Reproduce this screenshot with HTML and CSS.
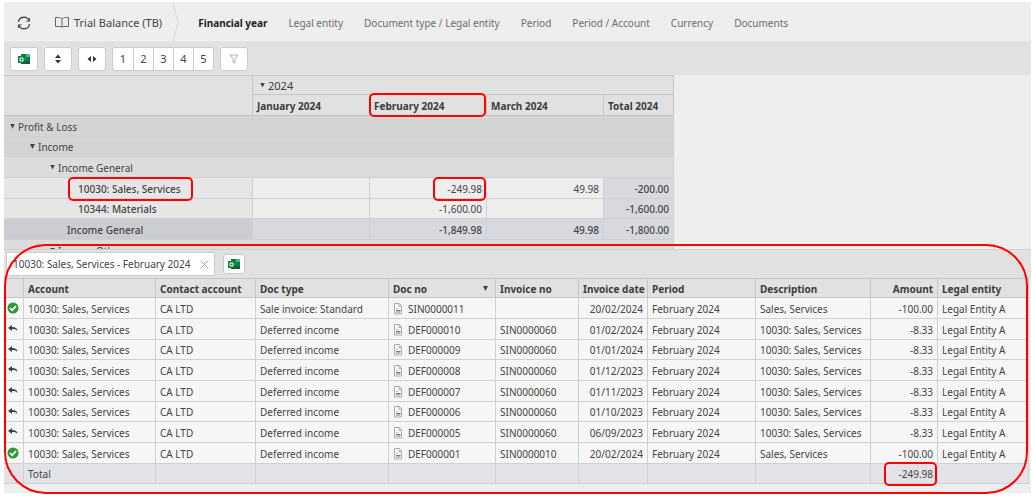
FILE: index.html
```html
<!DOCTYPE html>
<html lang="en">
<head>
    <meta charset="UTF-8">
    <meta name="viewport" content="width=device-width, initial-scale=1.0">
    <title>Trial Balance (TB)</title>
    <link rel="stylesheet" href="styles.css">
</head>
<body>
    <!-- Shared icons -->
    <svg class="sprite" aria-hidden="true">
        <symbol id="excel" viewBox="0 0 14 12">
            <path d="M4 1h9v10H4z" fill="#21a366"/>
            <path d="M4 1h5v3H4z" fill="#107c41"/>
            <path d="M9 1h4v3H9z" fill="#33c481"/>
            <path d="M4 7h9v4H4z" fill="#185c37"/>
            <path d="M9 4h4v4H9z" fill="#107c41"/>
            <path d="M1 3h7v7H1z" fill="#107c41"/>
            <path d="M3 5h3v3H3z" fill="none" stroke="#fff"/>
        </symbol>
        <symbol id="ok" viewBox="0 0 12 12">
            <circle cx="6" cy="6" r="5.5" fill="#2a9a35"/>
            <path d="M3 6l2.2 2.2L9 4.2" fill="none" stroke="#fff" stroke-width="1.7"/>
        </symbol>
        <symbol id="reply" viewBox="0 0 12 12">
            <path d="M1 5l4-3v2c3.500 0 5.300 1 5.300 4C9.300 6.300 7.600 6 5 6v2z" fill="#404040"/>
        </symbol>
        <symbol id="doc" viewBox="0 0 10 12">
            <path d="M1.500.5h5l2 2.500v8h-7z" fill="#fafafa" stroke="#aaa"/>
            <path d="M6 1v2.500h2.500" fill="none" stroke="#aaa"/>
            <path d="M3 5.500h2M3 9.500h4" stroke="#bbb"/>
            <path d="M3 7h4.500v1.500H3z" fill="#777"/>
        </symbol>
    </svg>

    <!-- Navigation -->
    <header class="topbar">
        <button class="refresh" aria-label="Refresh">
            <svg width="14" height="14" viewBox="0 0 14 14" fill="none" stroke="#444" stroke-width="1.300">
                <path d="M1.500 6A5.500 5.500 0 0 1 12 4.500M12.500 8A5.500 5.500 0 0 1 2 9.500"/>
                <path d="M12.600 2v3.200H9.500M1.400 12V8.800h3.100" stroke-width="1"/>
            </svg>
        </button>
        <a class="report" href="#">
            <svg width="14" height="11" viewBox="0 0 14 11" fill="none" stroke="#666">
                <path d="M7 2C6 .8 5 .5 3.500.5h-3v9H5c1 0 1.600.3 2 .8.400-.5 1-.8 2-.8h4.500v-9h-3C9 .5 8 .8 7 2zM7 2v8"/>
            </svg>
            Trial Balance (TB)
        </a>
        <svg class="chevron" width="8" height="39" viewBox="0 0 8 39" fill="none" stroke="#d6d6d6">
            <path d="M1 0l5 19.500L1 39"/>
        </svg>
        <nav class="views">
            <a class="active" href="#">Financial year</a>
            <a href="#">Legal entity</a>
            <a href="#">Document type / Legal entity</a>
            <a href="#">Period</a>
            <a href="#">Period / Account</a>
            <a href="#">Currency</a>
            <a href="#">Documents</a>
        </nav>
    </header>

    <!-- Toolbar -->
    <div class="toolbar">
        <button class="btn" aria-label="Export to Excel"><svg width="14" height="12"><use href="#excel"/></svg></button>
        <button class="btn" aria-label="Expand rows">
            <svg width="8" height="10" viewBox="0 0 8 10" fill="#333"><path d="M1 4l3-3.500L7 4zM1 6l3 3.500L7 6z"/></svg>
        </button>
        <button class="btn" aria-label="Expand columns">
            <svg width="10" height="8" viewBox="0 0 10 8" fill="#333"><path d="M4 1L.5 4 4 7zM6 1l3.500 3L6 7z"/></svg>
        </button>
        <div class="levels">
            <button>1</button>
            <button>2</button>
            <button>3</button>
            <button>4</button>
            <button>5</button>
        </div>
        <button class="btn" aria-label="Filter">
            <svg width="10" height="10" viewBox="0 0 10 10" fill="none" stroke="#a9b4c8"><path d="M1 1h8L6 5v4L4 8V5z"/></svg>
        </button>
    </div>

    <!-- Trial balance -->
    <main class="pivot">
        <table class="pivot-table">
            <colgroup>
                <col class="w-name"><col class="w-month"><col class="w-month"><col class="w-month"><col class="w-total">
            </colgroup>
            <thead>
                <tr><th rowspan="2"></th><th class="year" colspan="4"><i class="tri"></i>2024</th></tr>
                <tr><th>January 2024</th><th class="marked">February 2024</th><th>March 2024</th><th>Total 2024</th></tr>
            </thead>
            <tbody>
                <tr class="group"><td class="level-1" colspan="5"><i class="tri"></i>Profit &amp; Loss</td></tr>
                <tr class="group"><td class="level-2" colspan="5"><i class="tri"></i>Income</td></tr>
                <tr class="group light"><td class="level-3" colspan="5"><i class="tri"></i>Income General</td></tr>
                <tr><td class="name"><span class="marked-name">10030: Sales, Services</span></td><td></td><td><span class="marked-value">-249.98</span></td><td>49.98</td><td class="total">-200.00</td></tr>
                <tr><td class="name">10344: Materials</td><td></td><td>-1,600.00</td><td></td><td class="total">-1,600.00</td></tr>
                <tr class="subtotal"><td class="name">Income General</td><td></td><td>-1,849.98</td><td>49.98</td><td class="total">-1,800.00</td></tr>
                <tr class="group light"><td class="level-3" colspan="5"><i class="tri"></i>Income Other</td></tr>
            </tbody>
        </table>
    </main>

    <!-- Documents behind the selected amount -->
    <section class="detail">
        <div class="tabs">
            <div class="tab">
                <span>10030: Sales, Services - February 2024</span>
                <button class="close" aria-label="Close">
                    <svg width="9" height="9" viewBox="0 0 9 9" stroke="#aaa"><path d="M.5.5l8 8M8.500.5l-8 8"/></svg>
                </button>
            </div>
            <button class="btn small" aria-label="Export documents to Excel"><svg width="14" height="12"><use href="#excel"/></svg></button>
        </div>
        <table class="docs">
            <colgroup>
                <col class="w-icon"><col class="w-account"><col class="w-contact"><col class="w-type"><col class="w-doc"><col class="w-invoice"><col class="w-date"><col class="w-period"><col class="w-desc"><col class="w-amount"><col>
            </colgroup>
            <thead>
                <tr><th></th><th>Account</th><th>Contact account</th><th>Doc type</th><th><div class="sorted">Doc no<i class="tri"></i></div></th><th>Invoice no</th><th>Invoice date</th><th>Period</th><th>Description</th><th class="num">Amount</th><th>Legal entity</th></tr>
            </thead>
            <tbody>
                <tr><td class="state"><svg><use href="#ok"/></svg></td><td>10030: Sales, Services</td><td>CA LTD</td><td>Sale invoice: Standard</td><td><svg class="doc"><use href="#doc"/></svg>SIN0000011</td><td></td><td class="num">20/02/2024</td><td>February 2024</td><td>Sales, Services</td><td class="num">-100.00</td><td>Legal Entity A</td></tr>
                <tr><td class="state"><svg><use href="#reply"/></svg></td><td>10030: Sales, Services</td><td>CA LTD</td><td>Deferred income</td><td><svg class="doc"><use href="#doc"/></svg>DEF000010</td><td>SIN0000060</td><td class="num">01/02/2024</td><td>February 2024</td><td>10030: Sales, Services</td><td class="num">-8.33</td><td>Legal Entity A</td></tr>
                <tr><td class="state"><svg><use href="#reply"/></svg></td><td>10030: Sales, Services</td><td>CA LTD</td><td>Deferred income</td><td><svg class="doc"><use href="#doc"/></svg>DEF000009</td><td>SIN0000060</td><td class="num">01/01/2024</td><td>February 2024</td><td>10030: Sales, Services</td><td class="num">-8.33</td><td>Legal Entity A</td></tr>
                <tr><td class="state"><svg><use href="#reply"/></svg></td><td>10030: Sales, Services</td><td>CA LTD</td><td>Deferred income</td><td><svg class="doc"><use href="#doc"/></svg>DEF000008</td><td>SIN0000060</td><td class="num">01/12/2023</td><td>February 2024</td><td>10030: Sales, Services</td><td class="num">-8.33</td><td>Legal Entity A</td></tr>
                <tr><td class="state"><svg><use href="#reply"/></svg></td><td>10030: Sales, Services</td><td>CA LTD</td><td>Deferred income</td><td><svg class="doc"><use href="#doc"/></svg>DEF000007</td><td>SIN0000060</td><td class="num">01/11/2023</td><td>February 2024</td><td>10030: Sales, Services</td><td class="num">-8.33</td><td>Legal Entity A</td></tr>
                <tr><td class="state"><svg><use href="#reply"/></svg></td><td>10030: Sales, Services</td><td>CA LTD</td><td>Deferred income</td><td><svg class="doc"><use href="#doc"/></svg>DEF000006</td><td>SIN0000060</td><td class="num">01/10/2023</td><td>February 2024</td><td>10030: Sales, Services</td><td class="num">-8.33</td><td>Legal Entity A</td></tr>
                <tr><td class="state"><svg><use href="#reply"/></svg></td><td>10030: Sales, Services</td><td>CA LTD</td><td>Deferred income</td><td><svg class="doc"><use href="#doc"/></svg>DEF000005</td><td>SIN0000060</td><td class="num">06/09/2023</td><td>February 2024</td><td>10030: Sales, Services</td><td class="num">-8.33</td><td>Legal Entity A</td></tr>
                <tr><td class="state"><svg><use href="#ok"/></svg></td><td>10030: Sales, Services</td><td>CA LTD</td><td>Deferred income</td><td><svg class="doc"><use href="#doc"/></svg>DEF000001</td><td>SIN0000010</td><td class="num">20/02/2024</td><td>February 2024</td><td>Sales, Services</td><td class="num">-100.00</td><td>Legal Entity A</td></tr>
                <tr class="sum"><td></td><td>Total</td><td></td><td></td><td></td><td></td><td></td><td></td><td></td><td class="num"><span class="marked-value">-249.98</span></td><td></td></tr>
            </tbody>
        </table>
    </section>
</body>
</html>
```
FILE: styles.css
```css
* {
    box-sizing: border-box;
}

body {
    display: flex;
    flex-direction: column;
    height: 100vh;
    margin: 0;
    padding: 2px 1px 4px 4px;
    background-color: #fff;
    color: #444;
    font-family: "Noto Sans", "Open Sans", sans-serif;
    font-size: 10px;
    line-height: 16px;
}

a {
    color: inherit;
    text-decoration: none;
}

button {
    padding: 0;
    border: none;
    background: none;
    color: inherit;
    font: inherit;
    cursor: pointer;
}

svg {
    display: block;
}

.sprite {
    position: absolute;
    width: 0;
    height: 0;
}

/* Navigation */
.topbar {
    display: flex;
    flex: none;
    align-items: center;
    height: 39px;
    padding: 2px 0 0 13px;
    background-color: #eee;
    white-space: nowrap;
}

.report {
    display: flex;
    align-items: center;
    gap: 5px;
    margin: 0 10px 0 24px;
    font-size: 11px;
}

.views {
    display: flex;
    gap: 21px;
    margin-left: 18px;
    color: #6c6c6c;
}

.active {
    color: #222;
    font-weight: 700;
}

/* Toolbar */
.toolbar {
    display: flex;
    flex: none;
    align-items: center;
    gap: 6px;
    height: 34px;
    padding-left: 6px;
    border-top: 1px solid #e6e6e6;
    background-color: #e1e1e1;
}

.btn {
    display: flex;
    align-items: center;
    justify-content: center;
    width: 28px;
    height: 24px;
    border: 1px solid #ccc;
    border-radius: 3px;
    background-color: #fff;
}

.btn.small {
    width: 22px;
    height: 20px;
}

.levels {
    display: flex;
    border: 1px solid #ccc;
    border-radius: 3px;
    background-color: #fff;
    font-size: 11px;
}

.levels button {
    width: 20px;
    height: 22px;
}

.levels button + button {
    border-left: 1px solid #ccc;
}

/* Tables */
table {
    border-collapse: separate;
    border-spacing: 0;
    table-layout: fixed;
}

th, td {
    overflow: hidden;
    padding: 1px 4px 0;
    border-right: 1px solid #d0d0d0;
    border-bottom: 1px solid #d0d0d0;
    text-align: left;
    white-space: nowrap;
}

th {
    border-color: #c6c6c6;
    background-color: #e1e1e1;
    color: #3c3c3c;
    font-weight: 700;
}

tr {
    height: 21px;
}

.tri {
    display: inline-block;
    width: 5px;
    height: 5px;
    margin-right: 3px;
    background-color: #444;
    clip-path: polygon(0 0, 100% 0, 50% 100%);
    vertical-align: 2px;
}

/* Trial balance */
.pivot {
    flex: 1;
    min-height: 0;
    overflow: hidden;
    background-color: #eee;
}

.pivot-table {
    width: 670px;
}

.w-name { width: 249px; }
.w-month { width: 117px; }
.w-total { width: 70px; }

.pivot-table thead tr:first-child {
    height: 20px;
}

.pivot-table tbody tr:nth-child(3n + 2) {
    height: 20px;
}

.pivot-table th {
    border-top: 1px solid #c6c6c6;
}

.pivot-table thead tr + tr th {
    border-top: none;
}

.pivot-table .year {
    padding-left: 7px;
    font-size: 11px;
    font-weight: 400;
}

.pivot-table td {
    background-color: #eee;
    text-align: right;
}

.pivot-table .group td {
    border-color: #cfcfcf;
    background-color: #d4d4d4;
    text-align: left;
}

.pivot-table .light td {
    background-color: #dcdcdc;
}

.pivot-table .level-1 { padding-left: 6px; }
.pivot-table .level-2 { padding-left: 26px; }
.pivot-table .level-3 { padding-left: 46px; }

.pivot-table .name {
    padding-left: 74px;
    background-color: #e6e6e6;
    font-weight: 500;
    text-align: left;
}

.pivot-table .total {
    background-color: #d8d9de;
    font-weight: 500;
}

.pivot-table .subtotal td {
    background-color: #d8d9de;
    font-weight: 500;
}

.pivot-table .subtotal .name {
    padding-left: 63px;
    background-color: #cccdd2;
}

/* Red callouts */
.marked,
.marked-name,
.marked-value {
    position: relative;
}

th.marked,
td:has(.marked-name),
td:has(.marked-value) {
    overflow: visible;
}

.marked::after,
.marked-name::after,
.marked-value::after,
.detail::after {
    content: "";
    position: absolute;
    border: 2px solid #f00;
    border-radius: 5px;
    pointer-events: none;
}

.marked::after {
    inset: -2px 0 -2px -1px;
}

.marked-name::after {
    inset: -5px -12px -5px -10px;
}

.marked-value::after {
    inset: -5px -4px -5px -15px;
}

/* Documents */
.detail {
    position: relative;
    flex: none;
    padding-bottom: 9px;
    background-color: #eee;
}

.detail::after {
    inset: -5px 3px -1px 0;
    border-radius: 42px;
}

.tabs {
    display: flex;
    align-items: center;
    gap: 8px;
    height: 29px;
    padding-left: 2px;
    border-top: 1px solid #d0d0d0;
    background-color: #e1e1e1;
}

.tab {
    display: flex;
    align-items: center;
    gap: 10px;
    height: 24px;
    padding: 0 5px 0 6px;
    border: 1px solid #ccc;
    background-color: #fff;
}

.docs {
    width: 100%;
    padding-right: 2px;
}

.docs td {
    background-color: #f6f6f6;
}

.docs th {
    border-top: 1px solid #c6c6c6;
}

.docs thead tr,
.docs tbody tr:nth-child(3n) {
    height: 20px;
}

.docs .num {
    text-align: right;
}

.docs .state {
    padding: 0 3px;
}

.state svg {
    width: 12px;
    height: 12px;
}

.docs .doc {
    display: inline-block;
    width: 10px;
    height: 12px;
    margin-right: 5px;
    vertical-align: -2px;
}

.docs .sum td {
    background-color: #e2e3e9;
}

.sorted {
    display: flex;
    align-items: center;
    justify-content: space-between;
}

.w-icon { width: 20px; }
.w-account { width: 132px; }
.w-contact { width: 100px; }
.w-type { width: 133px; }
.w-doc { width: 107px; }
.w-invoice { width: 83px; }
.w-date { width: 69px; }
.w-period { width: 108px; }
.w-desc { width: 115px; }
.w-amount { width: 67px; }
```
